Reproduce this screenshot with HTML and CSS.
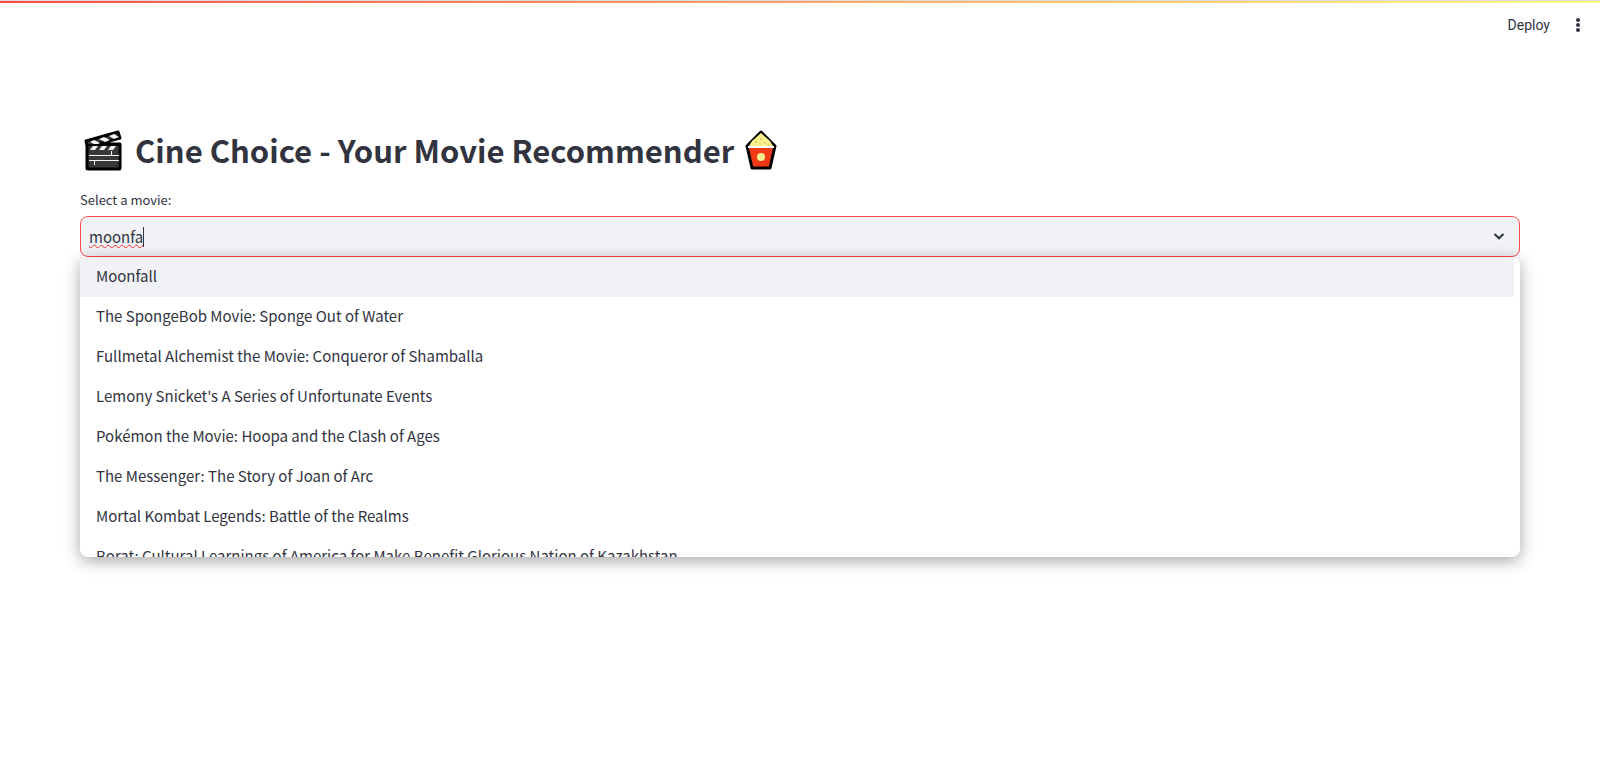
FILE: index.html
```html
<!DOCTYPE html>
<html lang="en">
<head>
<meta charset="utf-8">
<title>Cine Choice</title>
<link rel="stylesheet" href="styles.css">
</head>
<body>
<div class="decoration"></div>
<header class="toolbar">
  <button class="deploy" type="button">Deploy</button>
  <button class="menu-button" type="button" aria-label="Main menu">
    <svg width="16" height="16" viewBox="0 0 16 16" fill="currentColor"><circle cx="8" cy="3" r="2"/><circle cx="8" cy="8" r="2"/><circle cx="8" cy="13" r="2"/></svg>
  </button>
</header>
<main class="content">
  <h1 class="title">
    <svg class="emoji" width="40" height="42" viewBox="0 0 40 42" role="img" aria-label="Clapper board">
      <path d="M2 12 34 3 36 9 14 15H36V39Q36 40 35 40H4Q3 40 3 39V17Z" fill="#383838" stroke="#000" stroke-width="3" stroke-linejoin="round"/>
      <path d="M6 13 10 11 16 14 12 16ZM15 10 20 8 26 11 21 13ZM25 7 30 5 35 8 30 10ZM6 21 9 17H14L11 21ZM15 21 18 17H23L20 21ZM24 21 27 17H32L29 21Z" fill="#f4f4f4"/>
      <path d="M4 16H36" stroke="#000" stroke-width="2"/>
      <path d="M5 26.500H35M5 31.500H35M27.500 22V26M10.500 32V36" stroke="#f4f4f4" fill="none"/>
    </svg>
    <span>Cine Choice - Your Movie Recommender</span>
    <svg class="emoji" width="32" height="42" viewBox="0 0 32 42" role="img" aria-label="Popcorn">
      <path d="M2 17 16 3 30 17 25 39H7Z" fill="#f03a17" stroke="#000" stroke-width="3" stroke-linejoin="round"/>
      <path d="M4 17 7 12 16 4 25 12 28 17Z" fill="#fcf08f"/>
      <path d="M10 12h2v2h-2zM15 9h2v2h-2zM19 13h2v2h-2zM14 14h2v2h-2zM22 15h2v2h-2z" fill="#edcf5c"/>
      <path d="M3 18H29" stroke="#fff" stroke-width="2"/>
      <circle cx="16" cy="28" r="4" fill="#fcf08f"/>
    </svg>
  </h1>
  <label class="label" for="movie">Select a movie:</label>
  <div class="select">
    <div class="field">
      <div class="entry">
        <input class="input" id="movie" type="text" role="combobox" aria-expanded="true" aria-controls="movies" value="moonfa" autocomplete="off" spellcheck="false">
        <span class="caret"></span>
      </div>
      <svg class="chevron" width="24" height="24" viewBox="0 0 24 24" fill="none" stroke="currentColor" stroke-width="2"><path d="M7.500 9 12 13.300 16.500 9"/></svg>
    </div>
    <ul class="options" id="movies" role="listbox">
      <li class="option active" role="option" aria-selected="true">Moonfall</li>
      <li class="option" role="option">The SpongeBob Movie: Sponge Out of Water</li>
      <li class="option" role="option">Fullmetal Alchemist the Movie: Conqueror of Shamballa</li>
      <li class="option" role="option">Lemony Snicket's A Series of Unfortunate Events</li>
      <li class="option" role="option">Pokémon the Movie: Hoopa and the Clash of Ages</li>
      <li class="option" role="option">The Messenger: The Story of Joan of Arc</li>
      <li class="option" role="option">Mortal Kombat Legends: Battle of the Realms</li>
      <li class="option" role="option">Borat: Cultural Learnings of America for Make Benefit Glorious Nation of Kazakhstan</li>
    </ul>
  </div>
</main>
</body>
</html>
```
FILE: styles.css
```css
* { box-sizing: border-box; }
body {
  margin: 0;
  min-height: 100vh;
  background: #fff;
  color: #31333f;
  font-family: "Noto Sans CJK SC", "Noto Sans", sans-serif;
  font-size: 15px;
}
button {
  border: 0;
  padding: 0;
  background: none;
  color: inherit;
}
.decoration {
  height: 3px;
  border-top: 1px solid #dcdcdc;
  background: linear-gradient(90deg, #ff4b4b, #fffd80);
}
.toolbar {
  display: flex;
  justify-content: flex-end;
  align-items: center;
  gap: 20px;
  height: 44px;
  padding-right: 14px;
}
.deploy { font: 14px/20px Roboto, sans-serif; }
.menu-button { display: flex; }
.content { padding: 75px 80px 0; }
.title {
  display: flex;
  align-items: center;
  gap: 11px;
  margin: 0;
  padding: 4px;
  font-size: 31px;
  line-height: 48px;
  font-weight: 600;
}
.emoji { flex: none; }
.label {
  display: block;
  margin-top: 12px;
  margin-bottom: 6px;
  font-size: 13px;
  line-height: 20px;
}
.select { position: relative; }
.field {
  display: flex;
  align-items: center;
  justify-content: space-between;
  height: 41px;
  padding: 0 8px;
  border: 1px solid #ff4b4b;
  border-radius: 8px;
  background: #f0f2f6;
}
.entry { display: flex; align-items: center; }
.input {
  field-sizing: content;
  border: 0;
  padding: 0;
  outline: 0;
  background: none;
  color: inherit;
  font: inherit;
  line-height: 24px;
  text-decoration: underline wavy #ff2b2b 1px;
}
.caret { width: 1px; height: 20px; background: #31333f; }
.options {
  position: absolute;
  z-index: 1;
  top: 100%;
  left: 0;
  right: 0;
  max-height: 300px;
  overflow: hidden;
  margin: 0;
  padding: 0 6px 0 0;
  border-radius: 8px;
  background: #fff;
  box-shadow: 0 4px 16px rgba(0, 0, 0, 0.35);
  list-style: none;
}
.option { padding: 7px 16px 9px; line-height: 24px; }
.active { background: #f0f2f6; }
```
